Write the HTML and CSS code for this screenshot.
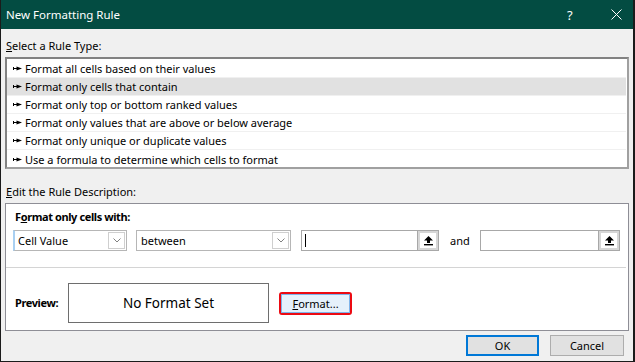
FILE: index.html
```html
<!DOCTYPE html>
<html>
<head>
<meta charset="utf-8">
<link rel="stylesheet" href="styles.css">
</head>
<body>
<div class="dialog">
  <div class="titlebar">
    <span class="title">New Formatting Rule</span>
    <span class="tb-help">?</span>
    <span class="tb-close">
      <svg width="11" height="11" viewBox="0 0 11 11"><path d="M0.5 0.5L10.5 10.5M10.5 0.5L0.5 10.5" stroke="#fff" stroke-width="1" fill="none"/></svg>
    </span>
  </div>
  <div class="content">
    <div class="label label-first"><u>S</u>elect a Rule Type:</div>
    <div class="listbox">
      <div class="row"><svg class="arrow" width="9" height="5" viewBox="0 0 9 5"><rect x="0" y="1" width="1" height="3"/><rect x="0" y="2" width="4" height="1"/><polygon points="3.5,0.5 9,2.5 3.5,4.5"/></svg>Format all cells based on their values</div>
      <div class="row sel"><svg class="arrow" width="9" height="5" viewBox="0 0 9 5"><rect x="0" y="1" width="1" height="3"/><rect x="0" y="2" width="4" height="1"/><polygon points="3.5,0.5 9,2.5 3.5,4.5"/></svg>Format only cells that contain</div>
      <div class="row"><svg class="arrow" width="9" height="5" viewBox="0 0 9 5"><rect x="0" y="1" width="1" height="3"/><rect x="0" y="2" width="4" height="1"/><polygon points="3.5,0.5 9,2.5 3.5,4.5"/></svg>Format only top or bottom ranked values</div>
      <div class="row"><svg class="arrow" width="9" height="5" viewBox="0 0 9 5"><rect x="0" y="1" width="1" height="3"/><rect x="0" y="2" width="4" height="1"/><polygon points="3.5,0.5 9,2.5 3.5,4.5"/></svg>Format only values that are above or below average</div>
      <div class="row"><svg class="arrow" width="9" height="5" viewBox="0 0 9 5"><rect x="0" y="1" width="1" height="3"/><rect x="0" y="2" width="4" height="1"/><polygon points="3.5,0.5 9,2.5 3.5,4.5"/></svg>Format only unique or duplicate values</div>
      <div class="row last"><svg class="arrow" width="9" height="5" viewBox="0 0 9 5"><rect x="0" y="1" width="1" height="3"/><rect x="0" y="2" width="4" height="1"/><polygon points="3.5,0.5 9,2.5 3.5,4.5"/></svg>Use a formula to determine which cells to format</div>
    </div>
    <div class="label label-second"><u>E</u>dit the Rule Description:</div>
    <div class="descbox">
      <div class="bold-label">F<u>o</u>rmat only cells with:</div>
      <div class="criteria">
        <div class="combo combo-1 focus">
          <span class="combo-text">Cell Value</span>
          <span class="dd"><svg width="8" height="5" viewBox="0 0 8 5"><path d="M0.5 0.5L4 4L7.5 0.5" stroke="#808080" fill="none"/></svg></span>
        </div>
        <div class="combo combo-2">
          <span class="combo-text">between</span>
          <span class="dd"><svg width="8" height="5" viewBox="0 0 8 5"><path d="M0.5 0.5L4 4L7.5 0.5" stroke="#808080" fill="none"/></svg></span>
        </div>
        <div class="ref ref-1">
          <span class="ref-text"><span class="caret"></span></span>
          <span class="ref-btn"><svg width="9" height="10" viewBox="0 0 9 10"><polygon points="4.5,0 9,4.5 6,4.5 6,7 3,7 3,4.5 0,4.5"/><rect x="0" y="8" width="9" height="1.4"/></svg></span>
        </div>
        <span class="and">and</span>
        <div class="ref ref-2">
          <span class="ref-text"></span>
          <span class="ref-btn"><svg width="9" height="10" viewBox="0 0 9 10"><polygon points="4.5,0 9,4.5 6,4.5 6,7 3,7 3,4.5 0,4.5"/><rect x="0" y="8" width="9" height="1.4"/></svg></span>
        </div>
      </div>
      <div class="sep"></div>
      <div class="preview-row">
        <span class="bold-label preview-label">Preview:</span>
        <div class="preview-box">No Format Set</div>
        <div class="hl">
          <button class="btn-format"><u>F</u>ormat...</button>
        </div>
      </div>
    </div>
    <div class="buttons">
      <button class="btn btn-ok">OK</button>
      <button class="btn btn-cancel">Cancel</button>
    </div>
  </div>
</div>
</body>
</html>
```
FILE: styles.css
```css
* { box-sizing: border-box; }
html, body { margin: 0; padding: 0; }
body {
  width: 635px;
  height: 362px;
  overflow: hidden;
  font-family: "Noto Sans", "Open Sans", sans-serif;
  font-size: 11px;
  color: #000;
}
.dialog {
  width: 635px;
  height: 362px;
  border: 1px solid #1b1b1b;
  border-right-width: 2px;
  border-top: none;
  background: #f0f0f0;
  display: flex;
  flex-direction: column;
}
.titlebar {
  height: 29px;
  background: #034c42;
  color: #fff;
  display: flex;
  align-items: center;
  padding-left: 5px;
  font-size: 11.5px;
}
.title { flex: 1; }
.tb-help { width: 12px; margin-right: 32px; font-size: 13px; }
.tb-close { width: 11px; margin-right: 11px; display: flex; }
.content {
  padding: 0 4px 0 4px;
  display: flex;
  flex-direction: column;
  flex: 1;
}
.label { height: 16px; line-height: 16px; padding-left: 1px; }
.label-first { margin-top: 9px; }
.label-second { margin-top: 15px; }
.listbox {
  margin-top: 3px;
  background: #fff;
  border: 2px solid #8a8a8a;
  border-color: #828282 #a0a0a0 #a0a0a0 #828282;
  padding: 1px 1px 0 0;
  height: 112px;
}
.row {
  height: 18px;
  line-height: 17px;
  border-bottom: 1px solid #f0f0f0;
  display: flex;
  align-items: center;
  padding-left: 6px;
  white-space: nowrap;
}
.row.last { border-bottom: none; }
.row.sel { background: #e1e1e1; }
.arrow { margin-right: 3px; fill: #000; flex: none; }
.descbox {
  margin-top: 3px;
  background: #fff;
  border: 1px solid #8e8e96;
  height: 128px;
  padding: 5px 0 0 0;
}
.bold-label {
  font-weight: bold;
  line-height: 16px;
  padding-left: 9px;
  display: block;
  letter-spacing: -0.4px;
}
.criteria {
  margin-top: 5px;
  display: flex;
  align-items: center;
  padding-left: 7px;
  height: 21px;
}
.combo {
  height: 21px;
  border: 1px solid #b6b6b6;
  display: flex;
  align-items: center;
  justify-content: space-between;
  background: #fff;
}
.combo.focus { border-left: 2px solid #a9d0f2; }
.combo-1 { width: 114px; }
.combo-2 { width: 155px; margin-left: 9px; }
.combo-text { padding-left: 3px; }
.combo-2 .combo-text { padding-left: 4px; }
.dd {
  width: 17px;
  height: 17px;
  margin-right: 1px;
  border: 1px solid #cfcfcf;
  display: flex;
  align-items: center;
  justify-content: center;
}
.ref {
  height: 21px;
  display: flex;
  border: 1px solid #a8a8a8;
  background: #fff;
}
.ref-1 { width: 138px; margin-left: 10px; }
.ref-2 { width: 140px; margin-left: 10px; }
.ref-text { flex: 1; display: flex; align-items: center; padding-left: 3px; }
.caret { width: 1px; height: 13px; background: #000; }
.ref-btn {
  width: 21px;
  height: 19px;
  border-left: 1px solid #a8a8a8;
  box-shadow: inset 0 0 0 2px #d6d6d6;
  display: flex;
  align-items: center;
  justify-content: center;
  background: #fff;
}
.and { margin-left: 11px; width: 20px; }
.sep {
  margin: 16px 2px 0 0;
  height: 1px;
  background: #d4d4d4;
}
.preview-row {
  margin-top: 15px;
  display: flex;
  align-items: center;
}
.preview-label { width: 62px; }
.preview-box {
  width: 201px;
  height: 40px;
  border: 1px solid #6e6e6e;
  display: flex;
  align-items: center;
  justify-content: center;
  font-size: 13.5px;
}
.hl {
  margin-left: 10px;
  border: 2px solid #ec0a12;
  border-radius: 3px;
  width: 73px;
  height: 23px;
  display: flex;
}
.btn-format {
  flex: 1;
  margin: 0;
  border: 1px solid #7eb4ea;
  background: #e5f1fb;
  font-family: inherit;
  font-size: 11px;
  color: #000;
  padding: 0;
}
.buttons {
  display: flex;
  justify-content: flex-end;
  margin-top: 4px;
  padding-right: 5px;
}
.btn {
  height: 21px;
  font-family: inherit;
  font-size: 11px;
  color: #000;
  background: #e1e1e1;
  padding: 0;
}
.btn-ok { width: 73px; border: 2px solid #0078d7; }
.btn-cancel { width: 74px; margin-left: 11px; border: 1px solid #adadad; }
```
